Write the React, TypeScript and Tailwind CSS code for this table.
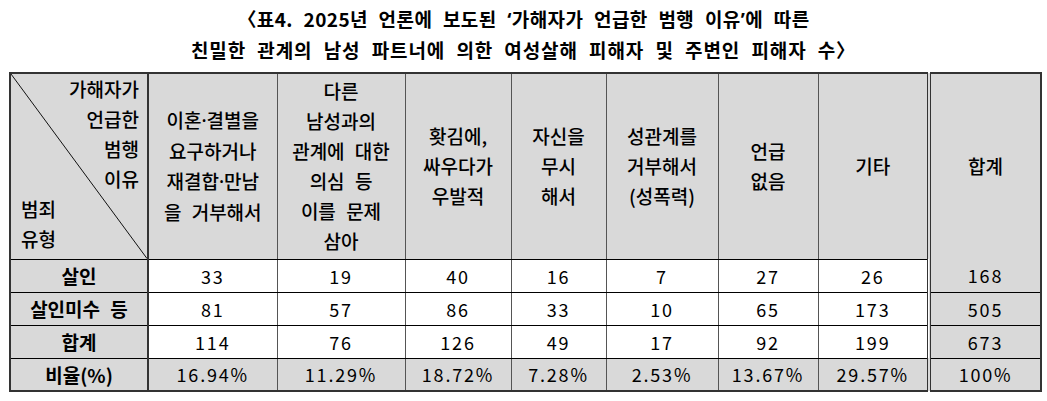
const FONT = { fontFamily: '"Noto Sans CJK KR", "Noto Sans", sans-serif' };
const NARROW = { fontFamily: '"Noto Sans", sans-serif' };

const cols = [138, 129, 128, 106, 95, 112, 100, 111, 112];

const headers: string[][] = [
  ['이혼·결별을', '요구하거나', '재결합·만남', '을 거부해서'],
  ['다른', '남성과의', '관계에 대한', '의심 등', '이를 문제', '삼아'],
  ['홧김에,', '싸우다가', '우발적'],
  ['자신을', '무시', '해서'],
  ['성관계를', '거부해서', '(성폭력)'],
  ['언급', '없음'],
  ['기타'],
];

const rows = [
  { label: '살인', values: ['33', '19', '40', '16', '7', '27', '26'], total: '168' },
  { label: '살인미수 등', values: ['81', '57', '86', '33', '10', '65', '173'], total: '505' },
  { label: '합계', values: ['114', '76', '126', '49', '17', '92', '199'], total: '673' },
];

const ratio = ['16.94%', '11.29%', '18.72%', '7.28%', '2.53%', '13.67%', '29.57%'];

// narrow middle dot, the CJK face draws it full width
function Line({ text }: { text: string }) {
  const parts = text.split('·');
  return (
    <div className="whitespace-nowrap">
      {parts.map((p, i) => (
        <span key={i}>
          {i > 0 && <span style={NARROW}>·</span>}
          {p}
        </span>
      ))}
    </div>
  );
}

export default function App() {
  return (
    <div className="w-[1047px] h-[401px] bg-white text-black" style={FONT}>
      <div className="pt-[4px] text-center text-[19px] font-bold leading-[29px] [word-spacing:6px]">
        <div className="tracking-[0.4px]">
          〈표4. 2025년 언론에 보도된 <span style={NARROW}>‘</span>가해자가 언급한 범행 이유
          <span style={NARROW}>’</span>에 따른
        </div>
        <div className="tracking-[0.9px]">
          친밀한 관계의 남성 파트너에 의한 여성살해 피해자 및 주변인 피해자 수〉
        </div>
      </div>

      <table className="ml-[9px] mt-[8px] table-fixed border-collapse border-2 border-[#333] text-[19px] [word-spacing:6px]">
        <colgroup>
          {cols.map((w, i) => (
            <col key={i} style={{ width: w }} />
          ))}
        </colgroup>
        <thead>
          <tr className="h-[186px] bg-[#d9d9d9]">
            <th className="relative border-r-2 border-r-[#333] border-b border-b-black p-0 align-top font-medium leading-[30px]">
              <svg className="absolute inset-0 h-full w-full" preserveAspectRatio="none" viewBox="0 0 100 100">
                <line x1="0" y1="0" x2="100" y2="100" stroke="#111" strokeWidth="1" vectorEffect="non-scaling-stroke" />
              </svg>
              <div className="relative flex flex-col">
                <span className="pr-[8px] text-right">가해자가</span>
                <span className="pr-[8px] text-right">언급한</span>
                <span className="pr-[8px] text-right">범행</span>
                <span className="pr-[8px] text-right">이유</span>
                <span className="pl-[10px] text-left">범죄</span>
                <span className="pl-[10px] text-left">유형</span>
              </div>
            </th>
            {headers.map((lines, i) => (
              <th
                key={i}
                className="border-r border-r-[#555] border-b border-b-black p-0 text-center align-middle font-medium leading-[30px]"
              >
                {lines.map((l, j) => (
                  <Line key={j} text={l} />
                ))}
              </th>
            ))}
            <th className="border-l-[4px] border-double border-l-[#333] p-0 text-center align-middle font-medium">
              합계
            </th>
          </tr>
        </thead>
        <tbody>
          {rows.map((r) => (
            <tr key={r.label} className="h-[33px]">
              <td className="border-r-2 border-r-[#333] border-b border-b-black bg-[#d9d9d9] p-0 text-center font-bold leading-none">
                {r.label}
              </td>
              {r.values.map((v, i) => (
                <td
                  key={i}
                  className="border-r border-r-[#555] border-b border-b-black bg-white p-0 text-center text-[18px] leading-none tracking-[0.1em]"
                >
                  {v}
                </td>
              ))}
              <td className="border-l-[4px] border-double border-l-[#333] border-b border-b-black bg-[#d9d9d9] p-0 text-center text-[18px] leading-none tracking-[0.1em]">
                {r.total}
              </td>
            </tr>
          ))}
          <tr className="h-[33px] bg-[#d9d9d9]">
            <td className="border-r-2 border-r-[#333] p-0 text-center font-bold leading-none">비율(%)</td>
            {ratio.map((v, i) => (
              <td key={i} className="border-r border-r-[#555] p-0 text-center text-[18px] leading-none tracking-[0.1em]">
                {v}
              </td>
            ))}
            <td className="border-l-[4px] border-double border-l-[#333] p-0 text-center text-[18px] leading-none tracking-[0.1em]">
              100%
            </td>
          </tr>
        </tbody>
      </table>
    </div>
  );
}
